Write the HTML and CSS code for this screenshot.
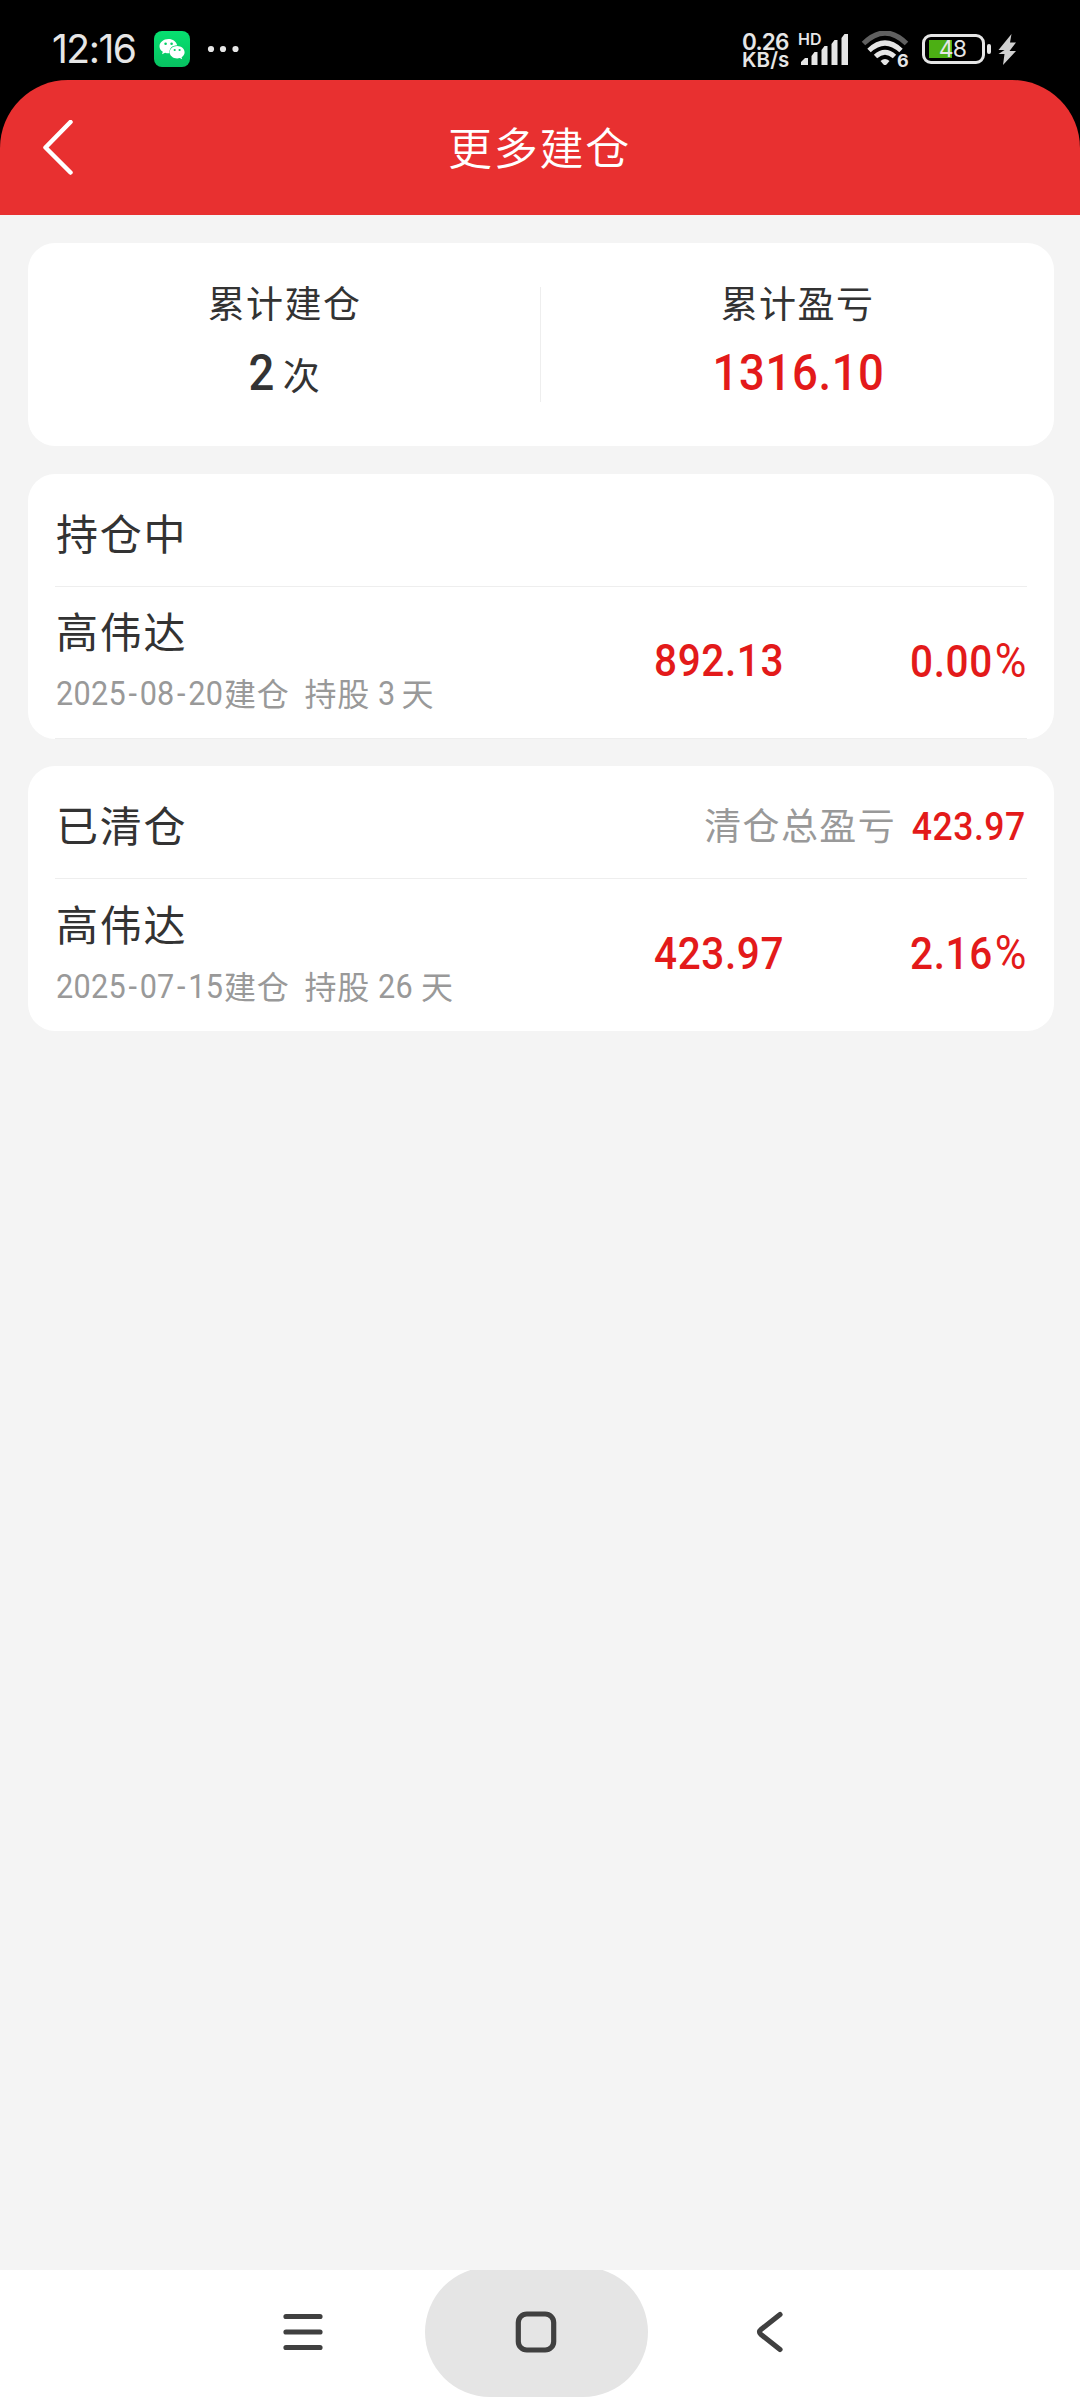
FILE: index.html
```html
<!DOCTYPE html>
<html lang="zh-CN">
<head>
  <meta charset="UTF-8" />
  <title>更多建仓</title>
  <meta name="viewport" content="width=device-width, initial-scale=1" />
  <link rel="stylesheet" href="styles.css">
</head>
<body>

  <!-- Status bar -->
  <div class="status-bar">
    <span class="clock">12:16</span>
    <svg class="wechat" viewBox="0 0 36 36">
      <defs>
        <linearGradient id="wechatBg" x1="0" y1="0" x2="0" y2="1">
          <stop offset="0" stop-color="#07e070" />
          <stop offset="1" stop-color="#07c261" />
        </linearGradient>
      </defs>
      <rect width="36" height="36" rx="8" fill="url(#wechatBg)" />
      <path fill="#fff" d="M14.5 8C9.500 8 5.500 11.300 5.500 15.300c0 2.300 1.300 4.200 3.300 5.500L8 23.200l3.100-1.500c1.100.4 2.200.5 3.700.5h.8C14.800 17.800 18 14.200 23.200 14.200C22.300 10.600 18.800 8 14.500 8z" />
      <path fill="#fff" d="M23.200 15c-4.200 0-7.500 2.800-7.500 6.200s3.300 6.200 7.500 6.200c.9 0 1.800-.1 2.600-.4l2.400 1.300-.6-2.100c1.900-1.200 3-3 3-5C30.600 17.800 27.300 15 23.200 15z" />
      <g fill="#07cf68">
        <circle cx="11.600" cy="12.800" r="1.300" /><circle cx="17.600" cy="12.800" r="1.300" />
        <circle cx="20.700" cy="19" r="1.100" /><circle cx="25.600" cy="19" r="1.100" />
      </g>
    </svg>
    <svg class="dots" viewBox="0 0 32 8">
      <circle cx="4" cy="4" r="3.100" /><circle cx="16" cy="4" r="3.100" /><circle cx="28.500" cy="4" r="3.100" />
    </svg>

    <div class="status-right">
      <div class="net-speed"><span>0.26</span><span class="net-unit">KB/s</span></div>
      <div class="signal">
        <span class="hd">HD</span>
        <svg viewBox="0 0 48 32">
          <path d="M0 31v-3l4-4h3v7zM10.500 31V22l3-4h3v13zM20.500 31V16l3-4h3v19zM30.500 31V10l3-4h3v25zM40.500 31V4l3-4h3.500v31z" />
        </svg>
      </div>
      <div class="wifi">
        <svg viewBox="0 0 48 36">
          <g fill="none" stroke-width="5">
            <path class="dim" d="M2.500 12.500Q24-8.500 45.500 12.500" />
            <path d="M8 19.500Q24 4.500 40 19.500" />
            <path d="M14.500 25.500Q24 17 33.500 25.500" />
          </g>
          <path class="solid" d="M19.500 30q4.500-4 9 0l-3 3.400q-1.500 1.200-3 0z" />
        </svg>
        <span class="wifi-gen">6</span>
      </div>
      <div class="battery"><span>48</span></div>
      <i class="battery-tip"></i>
      <svg class="bolt" viewBox="0 0 18 31"><path d="M13.500 0L.500 16h6L.500 20h6L5 31 18 17h-6.500L18 8.500h-6z" /></svg>
    </div>
  </div>

  <!-- Header -->
  <div class="header-wrap">
    <header class="header">
      <svg class="back" viewBox="0 0 30 56"><path d="M27.500 2L2.500 27.500 27.500 52.500" /></svg>
      <h1>更多建仓</h1>
    </header>
  </div>

  <main class="content">
    <section class="card summary">
      <div class="summary-item">
        <div class="label">累计建仓</div>
        <div class="value"><span class="num">2</span><span class="unit">次</span></div>
      </div>
      <div class="summary-item">
        <div class="label">累计盈亏</div>
        <div class="value red"><span class="num">1316.10</span></div>
      </div>
    </section>

    <section class="card">
      <div class="card-head">
        <h2>持仓中</h2>
      </div>
      <div class="row row-line">
        <div class="stock">
          <div class="name">高伟达</div>
          <div class="meta"><span class="num date">2025<i>-</i>08<i>-</i>20</span><span>建仓</span><span class="hold">持股</span><span class="num days">3</span><span>天</span></div>
        </div>
        <div class="amount num">892.13</div>
        <div class="rate num">0.00<span class="pct">%</span></div>
      </div>
    </section>

    <section class="card">
      <div class="card-head">
        <h2>已清仓</h2>
        <div class="total">清仓总盈亏<span class="num">423.97</span></div>
      </div>
      <div class="row">
        <div class="stock">
          <div class="name">高伟达</div>
          <div class="meta"><span class="num date">2025<i>-</i>07<i>-</i>15</span><span>建仓</span><span class="hold">持股</span><span class="num days">26</span><span>天</span></div>
        </div>
        <div class="amount num">423.97</div>
        <div class="rate num">2.16<span class="pct">%</span></div>
      </div>
    </section>
  </main>

  <!-- System navigation -->
  <nav class="nav-bar">
    <svg class="nav-menu" viewBox="0 0 40 40"><path d="M3 4.500h34M3 20h34M3 35.500h34" /></svg>
    <div class="nav-home">
      <svg viewBox="0 0 42 42"><rect x="3.300" y="3" width="35.400" height="36" rx="8.500" /></svg>
    </div>
    <svg class="nav-back" viewBox="0 0 28 42"><path d="M24 3.500L5 18.500q-3 2.500 0 5L24 38.500" /></svg>
  </nav>

</body>
</html>
```
FILE: styles.css
```css
* {
  box-sizing: border-box;
}

html, body {
  margin: 0;
  padding: 0;
}

body {
  width: 1080px;
  height: 2400px;
  display: flex;
  flex-direction: column;
  font-family: 'Noto Sans CJK SC', sans-serif;
  background: #f4f4f4;
  color: #333;
  overflow: hidden;
}

h1, h2 {
  margin: 0;
  font-weight: 400;
}

svg {
  display: block;
  flex-shrink: 0;
}

/* narrow figures */
.num {
  display: inline-block;
  font-family: Roboto, sans-serif;
  font-weight: 500;
  transform: scaleX(0.9);
}

/* status bar */
.status-bar {
  height: 80px;
  padding: 18px 64px 0 52px;
  display: flex;
  align-items: center;
  background: #000;
  color: #e6e6e6;
  fill: #e6e6e6;
  font-family: Inter, sans-serif;
}

.clock {
  width: 102px;
  font-size: 39px;
  line-height: 44px;
  letter-spacing: -1.5px;
}

.wechat {
  width: 36px;
  height: 36px;
}

.dots {
  width: 32px;
  height: 8px;
  margin-left: 17px;
}

.status-right {
  margin-left: auto;
  display: flex;
  align-items: center;
}

.net-speed {
  width: 57px;
  padding-top: 3px;
  display: flex;
  flex-direction: column;
  font-size: 22.500px;
  font-weight: 600;
  line-height: 18px;
  letter-spacing: -0.8px;
}

.net-unit {
  font-size: 20.500px;
  letter-spacing: 0.1px;
}

.signal {
  position: relative;
  width: 62px;
  height: 36px;
  padding: 3px 0 0 2px;
}

.signal svg {
  width: 48px;
  height: 32px;
}

.hd {
  position: absolute;
  left: -1px;
  top: 1px;
  font-size: 16px;
  font-weight: 600;
  line-height: 14px;
}

.wifi {
  position: relative;
  width: 61px;
  height: 36px;
}

.wifi svg {
  width: 48px;
  height: 36px;
  stroke: #e6e6e6;
}

.wifi .dim {
  stroke: #606060;
}

.wifi .solid {
  stroke: none;
}

.wifi-gen {
  position: absolute;
  left: 36px;
  top: 23px;
  font-size: 18px;
  font-weight: 700;
  line-height: 14px;
}

.battery {
  width: 63px;
  height: 30px;
  padding-right: 2px;
  border: 3px solid #e6e6e6;
  border-radius: 9px;
  background: linear-gradient(#4caf14, #4caf14) 4px 3px / 23px 18px no-repeat;
  text-align: center;
  font-size: 23px;
  line-height: 25px;
  letter-spacing: -0.8px;
}

.battery-tip {
  width: 4px;
  height: 10px;
  margin: 0 7px 0 2px;
  border-radius: 2px;
  background: #e6e6e6;
}

.bolt {
  width: 18px;
  height: 31px;
  fill: #d0d0d0;
}

/* header */
.header-wrap {
  background: #000;
}

.header {
  height: 135px;
  padding: 0 43px;
  display: flex;
  align-items: center;
  background: #e83030;
  border-radius: 68px 68px 0 0;
  color: #fff;
}

.back {
  width: 30px;
  height: 56px;
  fill: none;
  stroke: #fff;
  stroke-width: 4.500;
  stroke-linecap: round;
  stroke-linejoin: round;
}

.header h1 {
  flex: 1;
  padding: 0 31px 4px 0;
  text-align: center;
  font-size: 44px;
  font-weight: 350;
  line-height: 60px;
  letter-spacing: 1.7px;
}

/* cards */
.content {
  flex: 1;
  display: flex;
  flex-direction: column;
  gap: 27px;
  padding: 28px 26px 0 28px;
}

.card {
  background: #fff;
  border-radius: 27px;
  padding: 0 27px;
}

.summary {
  height: 203px;
  margin-bottom: 1px;
  padding: 36px 0;
  display: flex;
}

.summary-item {
  flex: 1;
  padding-top: 3px;
  display: flex;
  flex-direction: column;
  align-items: center;
}

.summary-item + .summary-item {
  position: relative;
}

.summary-item + .summary-item::before {
  content: "";
  position: absolute;
  left: -1px;
  top: 8px;
  width: 1px;
  height: 115px;
  background: #eee;
}

.label {
  font-size: 37px;
  line-height: 40px;
  letter-spacing: 1.4px;
}

.value {
  height: 60px;
  margin-top: 20px;
  display: flex;
  align-items: center;
  font-size: 50.500px;
  letter-spacing: 0.7px;
}

.red {
  padding-left: 2px;
}

.unit {
  margin: 4px 2px 0 6px;
  font-size: 37px;
  line-height: 50px;
  letter-spacing: 0;
}

.red, .amount, .rate, .total .num {
  color: #e31a1a;
}

.card-head {
  height: 113px;
  padding-top: 4px;
  display: flex;
  align-items: center;
  justify-content: space-between;
  border-bottom: 1px solid #eee;
}

.card-head h2, .name {
  padding-left: 1px;
  font-size: 42px;
  line-height: 56px;
  letter-spacing: 1.7px;
}

.total {
  display: flex;
  align-items: center;
  color: #999;
  font-size: 37px;
  letter-spacing: 1.4px;
}

.total .num {
  margin: 5px 1px 0 3px;
  transform-origin: right;
  font-size: 39.500px;
  letter-spacing: 0.6px;
}

.row {
  height: 152px;
  display: flex;
  align-items: center;
  padding-bottom: 3px;
}

.row-line {
  border-bottom: 1px solid #eee;
}

.stock {
  width: 599px;
  margin-top: -6px;
}

.meta {
  height: 44px;
  margin-top: 12px;
  padding-left: 1px;
  display: flex;
  align-items: center;
  color: #999;
  font-size: 32px;
  letter-spacing: 0.8px;
}

.meta .num {
  padding-top: 2px;
  transform-origin: left;
  font-size: 34px;
  font-weight: 450;
  letter-spacing: 0.3px;
}

.date {
  margin-right: -18px;
}

.date i {
  padding: 0 2.800px;
  font-style: normal;
}

.hold {
  margin-left: 15px;
}

.days {
  margin: 0 4px 0 8px;
}

.amount, .rate {
  font-size: 45px;
  line-height: 56px;
  letter-spacing: 0.7px;
}

.amount {
  transform-origin: left;
}

.rate {
  margin-left: auto;
  padding-right: 1px;
  transform-origin: right;
}

.pct {
  padding-left: 2px;
  font-size: 48px;
  font-weight: 400;
  letter-spacing: 0;
}

/* system navigation */
.nav-bar {
  height: 130px;
  display: flex;
  align-items: flex-start;
  background: #fff;
  overflow: hidden;
  fill: none;
  stroke: #404040;
  stroke-width: 5.200;
  stroke-linecap: round;
  stroke-linejoin: round;
}

.nav-menu {
  width: 40px;
  height: 40px;
  margin: 42px 0 0 283px;
}

.nav-home {
  width: 223px;
  height: 130px;
  margin: -3px 0 0 102px;
  padding-right: 2px;
  display: flex;
  align-items: center;
  justify-content: center;
  border-radius: 65px;
  background: #e5e5e5;
}

.nav-home svg {
  width: 42px;
  height: 42px;
}

.nav-back {
  width: 28px;
  height: 42px;
  margin: 41px 0 0 108px;
}
```
